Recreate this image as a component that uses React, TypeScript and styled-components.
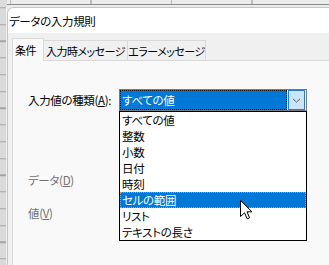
import { createGlobalStyle, styled } from 'styled-components';

const GlobalStyle = createGlobalStyle`
  html, body {
    margin: 0;
    padding: 0;
    overflow: hidden;
  }
  body {
    font-family: "Noto Sans CJK JP", "Noto Sans", sans-serif;
    font-size: 11.5px;
    letter-spacing: -0.35px;
    font-feature-settings: "palt";
    color: #000;
  }
`;

const items = ['すべての値', '整数', '小数', '日付', '時刻', 'セルの範囲', 'リスト', 'テキストの長さ'];
const tabs = [
  { label: '条件', width: 32, active: true },
  { label: '入力時メッセージ', width: 85, active: false },
  { label: 'エラーメッセージ', width: 79, active: false },
];

function App() {
  return (
    <>
      <GlobalStyle />
      <Page>
        <Corner />
        <ColumnHeader />
        <RowHeader />
        <Dialog>
          <TitleBar>データの入力規則</TitleBar>
          <Body>
            <TabList>
              {tabs.map((t) => (
                <Tab key={t.label} $active={t.active} $width={t.width}>
                  {t.label}
                </Tab>
              ))}
            </TabList>
            <Panel>
              <FieldRow>
                <Label>
                  入力値の種類(<u>A</u>):
                </Label>
                <Combo>
                  <Field>すべての値</Field>
                  <DropButton>
                    <svg width="9" height="5" viewBox="0 0 9 5">
                      <path d="M1 0.8 L4.5 4.2 L8 0.8" fill="none" stroke="#5a5a5a" strokeWidth="1" />
                    </svg>
                  </DropButton>
                  <List>
                    {items.map((it, i) => (
                      <Item key={it} $selected={i === 5}>
                        {it}
                      </Item>
                    ))}
                    <Cursor width="13" height="20" viewBox="0 0 13 20">
                      <path
                        d="M0.5 0.5 L0.5 16.5 L4.5 12.8 L7.2 18.8 L9.6 17.8 L7 11.8 L12 11.8 Z"
                        fill="#fff"
                        stroke="#000"
                        strokeWidth="1"
                        strokeLinejoin="round"
                      />
                    </Cursor>
                  </List>
                </Combo>
              </FieldRow>
              <DisabledLabel $gap={61}>
                データ(<u>D</u>)
              </DisabledLabel>
              <DisabledLabel $gap={17}>
                値(<u>V</u>)
              </DisabledLabel>
            </Panel>
          </Body>
        </Dialog>
      </Page>
    </>
  );
}

const Page = styled.div`
  display: grid;
  grid-template-columns: 7px 1fr;
  grid-template-rows: 7px 1fr;
  width: 329px;
  height: 265px;
  overflow: hidden;
  background: #e9e9e9;
`;

const Corner = styled.div`
  background: #dcdcdc;
`;

const ColumnHeader = styled.div`
  background:
    linear-gradient(#8c8c8c, #8c8c8c) 0 4px / 100% 1px no-repeat,
    repeating-linear-gradient(to right, #bcbcbc 0 1px, transparent 1px 80.5px) 3px 0 / 100% 4px no-repeat,
    #ececec;
`;

const RowHeader = styled.div`
  background:
    linear-gradient(#f0f0f0, #f0f0f0) 6px 0 / 1px 100% no-repeat,
    repeating-linear-gradient(to bottom, #a4a4a4 0 1px, transparent 1px 16.75px) 0 0.25px,
    #dadada;
`;

const Dialog = styled.div`
  display: flex;
  flex-direction: column;
  width: 340px;
  background: #f0f0f0;
  border-top: 1px solid #c4c4c4;
  border-left: 1px solid #c4c4c4;
  border-top-left-radius: 7px;
  overflow: hidden;
`;

const TitleBar = styled.div`
  display: flex;
  align-items: center;
  height: 25px;
  padding-left: 1px;
  background: #ffffff;
`;

const Body = styled.div`
  display: flex;
  flex-direction: column;
  flex: 1;
  padding: 5px 0 0 4px;
`;

const TabList = styled.div`
  display: flex;
  align-items: flex-end;
  height: 23px;
  margin-bottom: -1px;
  position: relative;
  z-index: 1;
`;

const Tab = styled.div<{ $active: boolean; $width: number }>`
  box-sizing: border-box;
  display: flex;
  flex: none;
  align-items: center;
  justify-content: ${(p) => (p.$active ? 'flex-start' : 'center')};
  width: ${(p) => p.$width}px;
  height: ${(p) => (p.$active ? 23 : 20)}px;
  padding-left: ${(p) => (p.$active ? 2 : 0)}px;
  padding-bottom: ${(p) => (p.$active ? 1 : 0)}px;
  margin-bottom: ${(p) => (p.$active ? 0 : 1)}px;
  margin-left: ${(p) => (p.$active ? 0 : -1)}px;
  background: ${(p) => (p.$active ? '#f9f9f9' : '#f0f0f0')};
  border: 1px solid #d9d9d9;
  border-bottom: none;
  font-size: 11px;
  letter-spacing: -0.5px;
  white-space: nowrap;
`;

const Panel = styled.div`
  flex: 1;
  display: flex;
  flex-direction: column;
  padding: 28px 0 0 15px;
  background: #f9f9f9;
  border-top: 1px solid #d9d9d9;
  border-left: 1px solid #d9d9d9;
`;

const FieldRow = styled.div`
  display: flex;
  align-items: center;
  height: 22px;
`;

const Label = styled.div`
  width: 91px;
  line-height: 16px;
  white-space: nowrap;
`;

const DisabledLabel = styled.div<{ $gap: number }>`
  margin-top: ${(p) => p.$gap}px;
  line-height: 16px;
  height: 16px;
  color: #707070;
`;

const Combo = styled.div`
  box-sizing: border-box;
  position: relative;
  display: flex;
  gap: 1px;
  width: 188px;
  height: 22px;
  background: #ffffff;
  border: 1px solid #7a7a7a;
`;

const Field = styled.div`
  flex: 1;
  display: flex;
  align-items: center;
  padding-left: 1px;
  background: #0078d7;
  color: #ffffff;
  border: 1px dotted #1a1a1a;
`;

const DropButton = styled.div`
  box-sizing: border-box;
  display: flex;
  align-items: center;
  justify-content: center;
  width: 17px;
  margin-right: 1px;
  background: #cce4f7;
  border: 1px solid #2c7bc2;
`;

const List = styled.div`
  position: absolute;
  top: 21px;
  left: -1px;
  width: 188px;
  box-sizing: border-box;
  background: #ffffff;
  border: 1px solid #000000;
  z-index: 2;
`;

const Item = styled.div<{ $selected: boolean }>`
  height: 16px;
  line-height: 16px;
  padding-left: 2px;
  white-space: nowrap;
  background: ${(p) => (p.$selected ? '#0078d7' : 'transparent')};
  color: ${(p) => (p.$selected ? '#ffffff' : '#000000')};
  outline: ${(p) => (p.$selected ? '1px dotted #ff8c1a' : 'none')};
  outline-offset: -1px;
`;

const Cursor = styled.svg`
  position: absolute;
  left: 120px;
  top: 88px;
`;

export default App;
